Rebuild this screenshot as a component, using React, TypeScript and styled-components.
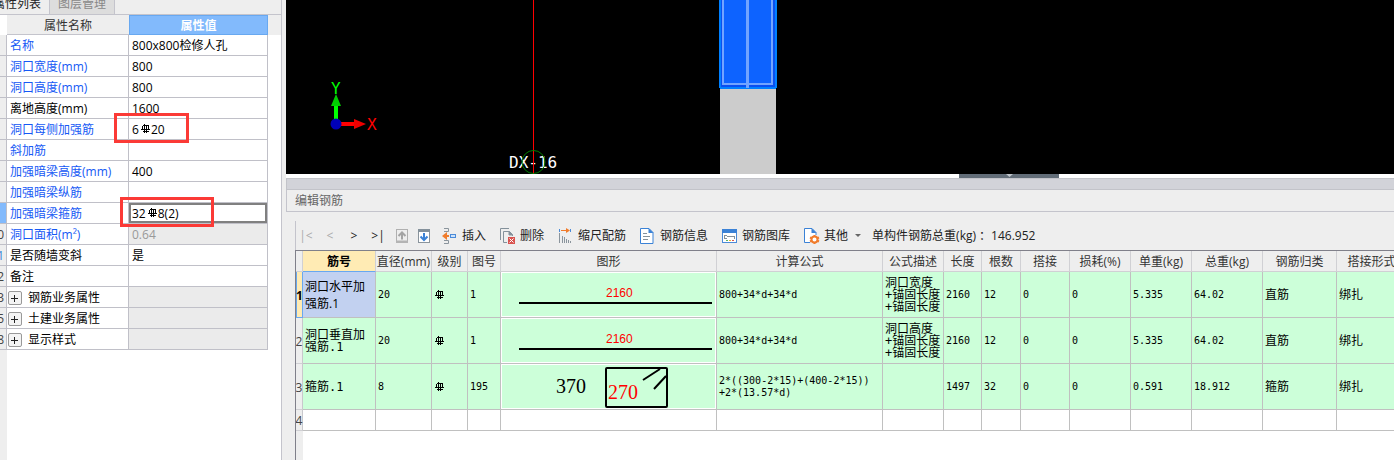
import React from 'react';
import styled, { createGlobalStyle, css } from 'styled-components';

const UI_FONT = '"Open Sans", "Noto Sans CJK SC", sans-serif';
const GRID_FONT = '"DejaVu Sans Mono", "Noto Sans CJK SC", monospace';

const GlobalStyle = createGlobalStyle`
  *, *::before, *::after { box-sizing: border-box; }
  body { margin: 0; background: #eeeeee; font: 12px/16px ${UI_FONT}; color: #000; }
  button { font: inherit; color: inherit; background: none; border: 0; padding: 0; }
`;

const Page = styled.div`
  display: flex;
  min-height: 100vh;
  overflow: hidden;
`;

/* ---------- property panel ---------- */

const Side = styled.aside`
  flex: none;
  display: flex;
  flex-direction: column;
  width: 282px;
  border-right: 1px solid #c4c4cc;
  background: #eeeeee;
`;

const Tabs = styled.div`
  display: flex;
  align-items: flex-end;
  height: 15px;
  overflow: hidden;
  border-bottom: 1px solid #c4c4cc;
`;

const Tab = styled.button<{ $active?: boolean }>`
  display: flex;
  align-items: center;
  justify-content: flex-end;
  flex: none;
  width: ${(p) => (p.$active ? 50 : 65)}px;
  height: 20px;
  padding-right: 8px;
  border-right: 1px solid #c4c4cc;
  white-space: nowrap;
  background: ${(p) => (p.$active ? '#eeeeee' : '#dddddd')};
  color: ${(p) => (p.$active ? '#222' : '#888')};
`;

const SideBody = styled.div`
  flex: 1;
  background: linear-gradient(to right, #eeeeee 7px, #ffffff 7px);
`;

const PropTable = styled.table`
  width: 100%;
  table-layout: fixed;
  border-collapse: separate;
  border-spacing: 0;
  td, th { padding: 2px 0 0; height: 21px; white-space: nowrap; }
  thead th { height: 20px; }
`;

const PropHead = styled.th<{ $kind: 'corner' | 'name' | 'value' | 'rest' }>`
  font-weight: ${(p) => (p.$kind === 'value' ? 700 : 400)};
  text-align: center;
  color: ${(p) => (p.$kind === 'value' ? '#fff' : '#333')};
  background: ${(p) => ({ corner: '#fff', name: '#eeeeee', value: '#82bafc', rest: '#eeeeee' })[p.$kind]};
  ${(p) => p.$kind === 'name' && css`border-bottom: 1px solid #c4c4cc;`}
  ${(p) => p.$kind === 'value' && css`border: 1px solid #68a8f0;`}
`;

const Ordinal = styled.td<{ $active?: boolean; $blue?: boolean }>`
  border-right: 1px solid #c0c0c8;
  border-bottom: 1px solid #c0c0c8;
  background: ${(p) => (p.$active ? '#82bafc' : '#eeeeee')};
  color: ${(p) => (p.$blue ? '#3a86d8' : '#444')};
`;

const OrdinalText = styled.span`
  display: flex;
  justify-content: flex-end;
  width: 4px;
  overflow: hidden;
`;

const PropName = styled.td<{ $linked?: boolean }>`
  border-right: 1px solid #c0c0c8;
  border-bottom: 1px solid #c0c0c8;
  background: #fff;
  color: ${(p) => (p.$linked ? '#1659f5' : '#000')};
  && { padding-left: 3px; }
`;

const PropValue = styled.td<{ $locked?: boolean; $active?: boolean }>`
  position: relative;
  border-right: 1px solid #c0c0c8;
  border-bottom: 1px solid #c0c0c8;
  background: ${(p) => (p.$locked ? '#ebebeb' : '#fff')};
  color: ${(p) => (p.$locked ? '#999' : '#000')};
  && { padding-left: 3px; }
  svg { margin-left: 1px; vertical-align: 0; }
  ${(p) => p.$active && css`box-shadow: inset 0 0 0 2px #808080;`}
`;

const Group = styled.span`
  display: flex;
  align-items: center;
  gap: 6px;
  margin-left: -2px;
`;

const Expander = styled.button`
  display: flex;
  align-items: center;
  justify-content: center;
  width: 14px;
  height: 14px;
  border: 1px solid #999;
  border-radius: 2px;
  background: #f4f4f4;
`;

const Mark = styled.span<{ $wide?: boolean }>`
  position: absolute;
  z-index: 1;
  top: -6px;
  left: ${(p) => (p.$wide ? -9 : -15)}px;
  width: ${(p) => (p.$wide ? 94 : 75)}px;
  height: 30px;
  border: 3px solid #fb3a36;
  pointer-events: none;
`;

/* ---------- work area ---------- */

const Main = styled.main`
  flex: 1;
  min-width: 0;
  display: flex;
  flex-direction: column;
  margin-left: 4px;
`;

const Viewport = styled.div`
  height: 174px;
  overflow: hidden;
  background: #000;
  svg { display: block; }
`;

const Splitter = styled.div`
  display: flex;
  justify-content: center;
  height: 4px;
  padding-left: 338px;
  background: #fff;
`;

const SplitHandle = styled.button`
  display: flex;
  justify-content: center;
  width: 100px;
  height: 4px;
  background: #626d78;
`;

const DockBar = styled.div`
  height: 12px;
  border: 1px solid #c2c3c9;
  border-right: 0;
  background: #d2d3d9;
`;

const DockTitle = styled.h2`
  margin: 0;
  height: 22px;
  padding: 3px 0 0 8px;
  border-left: 1px solid #c4c4cc;
  border-bottom: 1px solid #c4c4cc;
  font-size: 12px;
  line-height: 16px;
  font-weight: 400;
  color: #666;
`;

const Editor = styled.section`
  flex: 1;
  display: flex;
  flex-direction: column;
  margin: 9px 0 0 9px;
`;

const Toolbar = styled.div`
  display: flex;
  align-items: center;
  height: 29px;
  border-left: 1px solid #c4c4cc;
  color: #222;
  white-space: nowrap;
`;

const Cluster = styled.div<{ $gap: number; $left?: number }>`
  display: flex;
  align-items: center;
  gap: ${(p) => p.$gap}px;
  margin-left: ${(p) => p.$left ?? 0}px;
`;

const NavButton = styled.button`
  display: flex;
  align-items: center;
  justify-content: center;
  width: 20px;
  height: 20px;
  &:disabled { color: #aaa; }
  svg { display: block; }
`;

const Tool = styled.button`
  display: flex;
  align-items: center;
  gap: 4px;
  svg { display: block; flex: none; }
`;

const Total = styled.span`
  margin-left: 8px;
`;

const Sheet = styled.div`
  flex: 1;
  overflow: hidden;
  border-top: 1px solid #80808a;
  border-left: 1px solid #80808a;
  background: linear-gradient(to right, #eeeeee 7px, #ffffff 7px);
`;

const BarTable = styled.table`
  width: 100%;
  min-width: 1111px;
  table-layout: fixed;
  border-collapse: separate;
  border-spacing: 0;
`;

const Head = styled.th<{ $active?: boolean }>`
  height: 21px;
  padding: 2px 0 0;
  border-right: 1px solid #d0d0d4;
  border-bottom: 1px solid #d0d0d4;
  background: #eeeeee;
  font-weight: 400;
  color: #333;
  white-space: nowrap;
  ${(p) => p.$active && css`
    background: #ffebb4;
    font-weight: 700;
    color: #000;
    border-bottom-color: #68a8f0;
  `}
`;

const RowNo = styled.th<{ $active?: boolean }>`
  padding: 2px 0 0;
  border-right: 1px solid #c8c8cc;
  border-bottom: 1px solid #d0d0d4;
  background: #eeeeee;
  font-weight: 400;
  color: #444;
  text-align: center;
  ${(p) => p.$active && css`
    background: #ffebb4;
    font-weight: 700;
    color: #000;
    border: 1px solid #68a8f0;
    border-top: 0;
  `}
  span { display: flex; justify-content: center; margin: 0 -2px; }
`;

const Cell = styled.td<{ $blank?: boolean; $active?: boolean; $kind?: 'text' | 'number' | 'figure' }>`
  height: ${(p) => (p.$blank ? 21 : 46)}px;
  padding: ${(p) => (p.$kind === 'figure' ? 0 : '0 2px')};
  border-right: 1px solid #c0c0c0;
  border-bottom: 1px solid #c0c0c0;
  background: ${(p) => (p.$blank ? '#fff' : p.$active ? '#c2d1f0' : '#ccffd9')};
  font-family: ${(p) => (p.$active ? UI_FONT : GRID_FONT)};
  font-size: ${(p) => (p.$kind === 'text' ? 12 : 10)}px;
  line-height: ${(p) => (p.$active ? 17 : 12)}px;
  white-space: pre;
`;

const Figure = styled.svg`
  display: block;
  width: 100%;
  height: 45px;
  border: 1px solid #fff;
`;

const RebarGlyph = styled.svg`
  display: inline-block;
  vertical-align: -2px;
`;

/* HRB400 grade sign */
const Grade = () => (
  <RebarGlyph width="11" height="11" viewBox="0 0 11 11" fill="none" stroke="#000" role="img" aria-label="HRB400">
    <path d="M3 2.500H9M2.500 3V6M8.500 3V6M4.500 1V10M6.500 2V10M1 6.500H10M3 8.500H9" shapeRendering="crispEdges" />
  </RebarGlyph>
);

const Plus = () => (
  <svg width="8" height="8" viewBox="0 0 8 8" shapeRendering="crispEdges">
    <path d="M0 4.5H7M3.500 1V8" stroke="#222" />
  </svg>
);

const ArrowBox = ({ down }: { down?: boolean }) => (
  <svg width="12" height="14" viewBox="0 0 12 14" fill="none">
    {down ? (
      <>
        <rect x=".5" y=".5" width="11" height="13" fill="#fff" stroke="#8a949c" />
        <path d="M0 0H12V3H0Z" fill="#84919b" />
        <path d="M6 4V11M2.5 7.5L6 11L9.5 7.5" stroke="#3b82d6" strokeWidth="2" />
      </>
    ) : (
      <>
        <rect x=".5" y=".5" width="11" height="13" stroke="#b0b0b0" />
        <path d="M0 11.5H12V14H0Z" fill="#b4b4b4" />
        <path d="M6 10.5V4M2.5 7L6 3.5L9.5 7" stroke="#a4a4a4" strokeWidth="2" />
      </>
    )}
  </svg>
);

const InsertIcon = () => (
  <svg width="16" height="16" viewBox="0 0 16 16" fill="none">
    <path d="M2 .5H6.500V3.500H2M2 15.500H6.500V12.500H2" stroke="#8a949c" />
    <path d="M2 8H7" stroke="#f07c2c" strokeWidth="2" />
    <path d="M0 8L5 4V12Z" fill="#f07c2c" />
    <rect x="8.500" y="6.500" width="5" height="3" fill="#cfe3fa" stroke="#4a8ad8" />
  </svg>
);

const DeleteIcon = () => (
  <svg width="16" height="16" viewBox="0 0 16 16" fill="none">
    <path d="M.5 12V.5H9M3.500 14.500V3.500H9.500L12.500 6.500V8M9 3.500V7H12M3.500 14.500H7" stroke="#84919b" />
    <path d="M9 3L13 7H9Z" fill="#84919b" />
    <rect x="8" y="9" width="7" height="7" fill="#d9534f" />
    <path d="M9.500 10.500L13.500 14.500M13.500 10.500L9.500 14.500" stroke="#fff" />
  </svg>
);

const ScaleIcon = () => (
  <svg width="16" height="16" viewBox="0 0 16 16" fill="none">
    <path d="M3 2.500H9" stroke="#f07c2c" />
    <path d="M8 0L12 2.500L8 5Z" fill="#f07c2c" />
    <path d="M1.500 1V4M12.500 1V4" stroke="#4a8ad8" />
    <path d="M1.500 5V15M4.500 8V15M6.500 9V15M8.500 11V15M10.500 12V15M12.500 13V15" stroke="#8a949c" shapeRendering="crispEdges" />
  </svg>
);

const InfoIcon = () => (
  <svg width="16" height="16" viewBox="0 0 16 16" fill="none">
    <path d="M.5 .5H9L13 4.500V15.500H.5Z" fill="#fff" stroke="#3b82d6" />
    <path d="M8.500 0L13.500 5H8.500Z" fill="#3b82d6" />
    <path d="M3 5.500H7M3 8.500H10M3 11.500H8" stroke="#84919b" />
  </svg>
);

const LibraryIcon = () => (
  <svg width="16" height="16" viewBox="0 0 16 16" fill="none">
    <rect x=".5" y="1.500" width="14" height="13" fill="#fff" stroke="#4a8ad8" />
    <path d="M0 1H15V5H0Z" fill="#3b82d6" />
    <path d="M2 7.500H5M2.500 7V11M2 10.500H5M5 8.500H13M12.500 8V11" stroke="#84919b" />
    <path d="M4 12.500H6" stroke="#58b368" />
    <path d="M7 12.500H9" stroke="#f0b429" />
    <path d="M10 12.500H12" stroke="#d9534f" />
  </svg>
);

const OtherIcon = () => (
  <svg width="16" height="16" viewBox="0 0 16 16" fill="none">
    <path d="M6 14.500H.5V.5H8L12 4.500V7" fill="#fff" stroke="#3b82d6" />
    <path d="M7.500 0L12.500 5H7.500Z" fill="#3b82d6" />
    <path d="M10.500 7V16M6 9.500L15 13.500M6 13.500L15 9.500" stroke="#f07c2c" strokeWidth="2" />
    <circle cx="10.500" cy="11.500" r="3" fill="#fff" stroke="#f07c2c" strokeWidth="2" />
  </svg>
);

const Caret = () => (
  <svg width="12" height="6" viewBox="0 0 12 6">
    <path d="M3 1H9L6 4Z" fill="#666" />
  </svg>
);

type Prop = {
  no: string;
  name: string;
  value?: React.ReactNode;
  linked?: boolean;
  locked?: boolean;
  active?: boolean;
  group?: boolean;
  mark?: 'narrow' | 'wide';
};

const PROPS: Prop[] = [
  { no: '', name: '名称', value: '800x800检修人孔', linked: true },
  { no: '', name: '洞口宽度(mm)', value: '800', linked: true },
  { no: '', name: '洞口高度(mm)', value: '800', linked: true },
  { no: '', name: '离地高度(mm)', value: '1600' },
  { no: '', name: '洞口每侧加强筋', value: <>6<Grade />20</>, linked: true, mark: 'narrow' },
  { no: '', name: '斜加筋', linked: true },
  { no: '', name: '加强暗梁高度(mm)', value: '400', linked: true },
  { no: '', name: '加强暗梁纵筋', linked: true },
  { no: '', name: '加强暗梁箍筋', value: <>32<Grade />8(2)</>, linked: true, active: true, mark: 'wide' },
  { no: '0', name: '洞口面积(m²)', value: '0.64', linked: true, locked: true },
  { no: '1', name: '是否随墙变斜', value: '是' },
  { no: '2', name: '备注' },
  { no: '3', name: '钢筋业务属性', group: true, locked: true },
  { no: '5', name: '土建业务属性', group: true, locked: true },
  { no: '8', name: '显示样式', group: true, locked: true },
];

const COLUMNS: [string, number | undefined][] = [
  ['筋号', 73],
  ['直径(mm)', 56],
  ['级别', 36],
  ['图号', 33],
  ['图形', 216],
  ['计算公式', 166],
  ['公式描述', 61],
  ['长度', 38],
  ['根数', 39],
  ['搭接', 49],
  ['损耗(%)', 61],
  ['单重(kg)', 61],
  ['总重(kg)', 71],
  ['钢筋归类', 74],
  ['搭接形式', undefined],
];

const StraightBar = () => (
  <Figure>
    <text x="104" y="24" fill="#f00" fontSize="12" fontFamily="Liberation Sans, sans-serif">2160</text>
    <path d="M17 30H210" stroke="#000" strokeWidth="2" />
  </Figure>
);

const Stirrup = () => (
  <Figure>
    <text x="54" y="28" fontSize="20" fontFamily="Liberation Serif, serif">370</text>
    <rect x="104" y="3" width="61" height="39" rx="1" fill="none" stroke="#000" strokeWidth="2" />
    <text x="106" y="34" fill="#f00" fontSize="20" fontFamily="Liberation Serif, serif">270</text>
    <path d="M141 15L158 4M152 24L164 11" stroke="#000" strokeWidth="2" />
  </Figure>
);

const BARS = [
  {
    name: '洞口水平加\n强筋.1', dia: '20', shape: '1', figure: <StraightBar />, formula: '800+34*d+34*d',
    note: '洞口宽度\n+锚固长度\n+锚固长度', length: '2160', count: '12', unit: '5.335', total: '64.02', kind: '直筋',
  },
  {
    name: '洞口垂直加\n强筋.1', dia: '20', shape: '1', figure: <StraightBar />, formula: '800+34*d+34*d',
    note: '洞口高度\n+锚固长度\n+锚固长度', length: '2160', count: '12', unit: '5.335', total: '64.02', kind: '直筋',
  },
  {
    name: '箍筋.1', dia: '8', shape: '195', figure: <Stirrup />, formula: '2*((300-2*15)+(400-2*15))\n+2*(13.57*d)',
    note: '', length: '1497', count: '32', unit: '0.591', total: '18.912', kind: '箍筋',
  },
];

const Scene = () => (
  <svg width="1108" height="174" viewBox="0 0 1108 174" fontFamily="DejaVu Sans Mono, monospace" fontSize="16">
    <path d="M50 101V124" stroke="#0f0" strokeWidth="4" />
    <path d="M50 94L55 106H45Z" fill="#0c0" />
    <path d="M54 124H69" stroke="#f00" strokeWidth="4" />
    <path d="M68 119L80 124L68 129Z" fill="#e00" />
    <circle cx="50" cy="124" r="5.500" fill="#0000b8" />
    <text x="45" y="94" fill="#0f0">Y</text>
    <text x="81" y="130" fill="#f00">X</text>
    <text x="223" y="168" fill="#fff">DX-16</text>
    <path d="M247.500 0V174" stroke="#f00" />
    <circle cx="247.500" cy="162" r="11.500" fill="none" stroke="#008000" />
    <rect x="434" y="88" width="56" height="86" fill="#ccc" />
    <g shapeRendering="crispEdges">
      <path d="M433 0H491V88H490V89H434V88H433Z" fill="#0080ff" />
      <rect x="435" y="0" width="54" height="87" fill="#0a50f0" />
      <rect x="436" y="0" width="51" height="85" fill="#72a4ff" />
      <rect x="438" y="0" width="47" height="83" fill="#0d63ff" />
      <rect x="460" y="0" width="3" height="88" fill="#72a4ff" />
    </g>
  </svg>
);

export default function App() {
  return (
    <Page>
      <GlobalStyle />
      <Side>
        <Tabs role="tablist">
          <Tab $active role="tab" aria-selected="true">属性列表</Tab>
          <Tab role="tab" aria-selected="false">图层管理</Tab>
        </Tabs>
        <SideBody>
          <PropTable>
            <colgroup>
              <col style={{ width: 7 }} />
              <col style={{ width: 122 }} />
              <col style={{ width: 139 }} />
              <col />
            </colgroup>
            <thead>
              <tr>
                <PropHead $kind="corner" />
                <PropHead $kind="name" scope="col">属性名称</PropHead>
                <PropHead $kind="value" scope="col">属性值</PropHead>
                <PropHead $kind="rest" />
              </tr>
            </thead>
            <tbody>
              {PROPS.map((p) => (
                <tr key={p.name}>
                  <Ordinal $active={p.active} $blue={p.no === '1'}><OrdinalText>{p.no}</OrdinalText></Ordinal>
                  <PropName $linked={p.linked}>
                    {p.group ? (
                      <Group><Expander aria-label={p.name}><Plus /></Expander>{p.name}</Group>
                    ) : p.name}
                  </PropName>
                  <PropValue $locked={p.locked} $active={p.active}>
                    {p.value}
                    {p.mark && <Mark $wide={p.mark === 'wide'} />}
                  </PropValue>
                  <td />
                </tr>
              ))}
            </tbody>
          </PropTable>
        </SideBody>
      </Side>

      <Main>
        <Viewport><Scene /></Viewport>
        <Splitter>
          <SplitHandle aria-label="折叠">
            <svg width="7" height="3" viewBox="0 0 7 3"><path d="M0 0H7L3.500 3Z" fill="#c0c6cc" /></svg>
          </SplitHandle>
        </Splitter>
        <DockBar />
        <DockTitle>编辑钢筋</DockTitle>
        <Editor>
          <Toolbar role="toolbar">
            <Cluster $gap={4}>
              <NavButton disabled>|&lt;</NavButton>
              <NavButton disabled>&lt;</NavButton>
              <NavButton>&gt;</NavButton>
              <NavButton>&gt;|</NavButton>
            </Cluster>
            <Cluster $gap={2} $left={4}>
              <NavButton disabled aria-label="上移"><ArrowBox /></NavButton>
              <NavButton aria-label="下移"><ArrowBox down /></NavButton>
            </Cluster>
            <Cluster $gap={14} $left={8}>
              <Tool><InsertIcon />插入</Tool>
              <Tool><DeleteIcon />删除</Tool>
              <Tool><ScaleIcon />缩尺配筋</Tool>
              <Tool><InfoIcon />钢筋信息</Tool>
              <Tool><LibraryIcon />钢筋图库</Tool>
              <Tool><OtherIcon />其他<Caret /></Tool>
            </Cluster>
            <Total>单构件钢筋总重(kg) ：146.952</Total>
          </Toolbar>
          <Sheet>
            <BarTable>
              <colgroup>
                <col style={{ width: 7 }} />
                {COLUMNS.map(([label, width]) => <col key={label} style={{ width }} />)}
              </colgroup>
              <thead>
                <tr>
                  <Head />
                  {COLUMNS.map(([label], i) => <Head key={label} scope="col" $active={i === 0}>{label}</Head>)}
                </tr>
              </thead>
              <tbody>
                {BARS.map((b, i) => (
                  <tr key={b.name}>
                    <RowNo scope="row" $active={i === 0}><span>{i + 1}</span></RowNo>
                    <Cell $kind="text" $active={i === 0}>{b.name}</Cell>
                    <Cell>{b.dia}</Cell>
                    <Cell><Grade /></Cell>
                    <Cell>{b.shape}</Cell>
                    <Cell $kind="figure">{b.figure}</Cell>
                    <Cell>{b.formula}</Cell>
                    <Cell $kind="text">{b.note}</Cell>
                    <Cell>{b.length}</Cell>
                    <Cell>{b.count}</Cell>
                    <Cell>0</Cell>
                    <Cell>0</Cell>
                    <Cell>{b.unit}</Cell>
                    <Cell>{b.total}</Cell>
                    <Cell $kind="text">{b.kind}</Cell>
                    <Cell $kind="text">绑扎</Cell>
                  </tr>
                ))}
                <tr>
                  <RowNo scope="row"><span>4</span></RowNo>
                  {COLUMNS.map(([label]) => <Cell key={label} $blank />)}
                </tr>
              </tbody>
            </BarTable>
          </Sheet>
        </Editor>
      </Main>
    </Page>
  );
}
